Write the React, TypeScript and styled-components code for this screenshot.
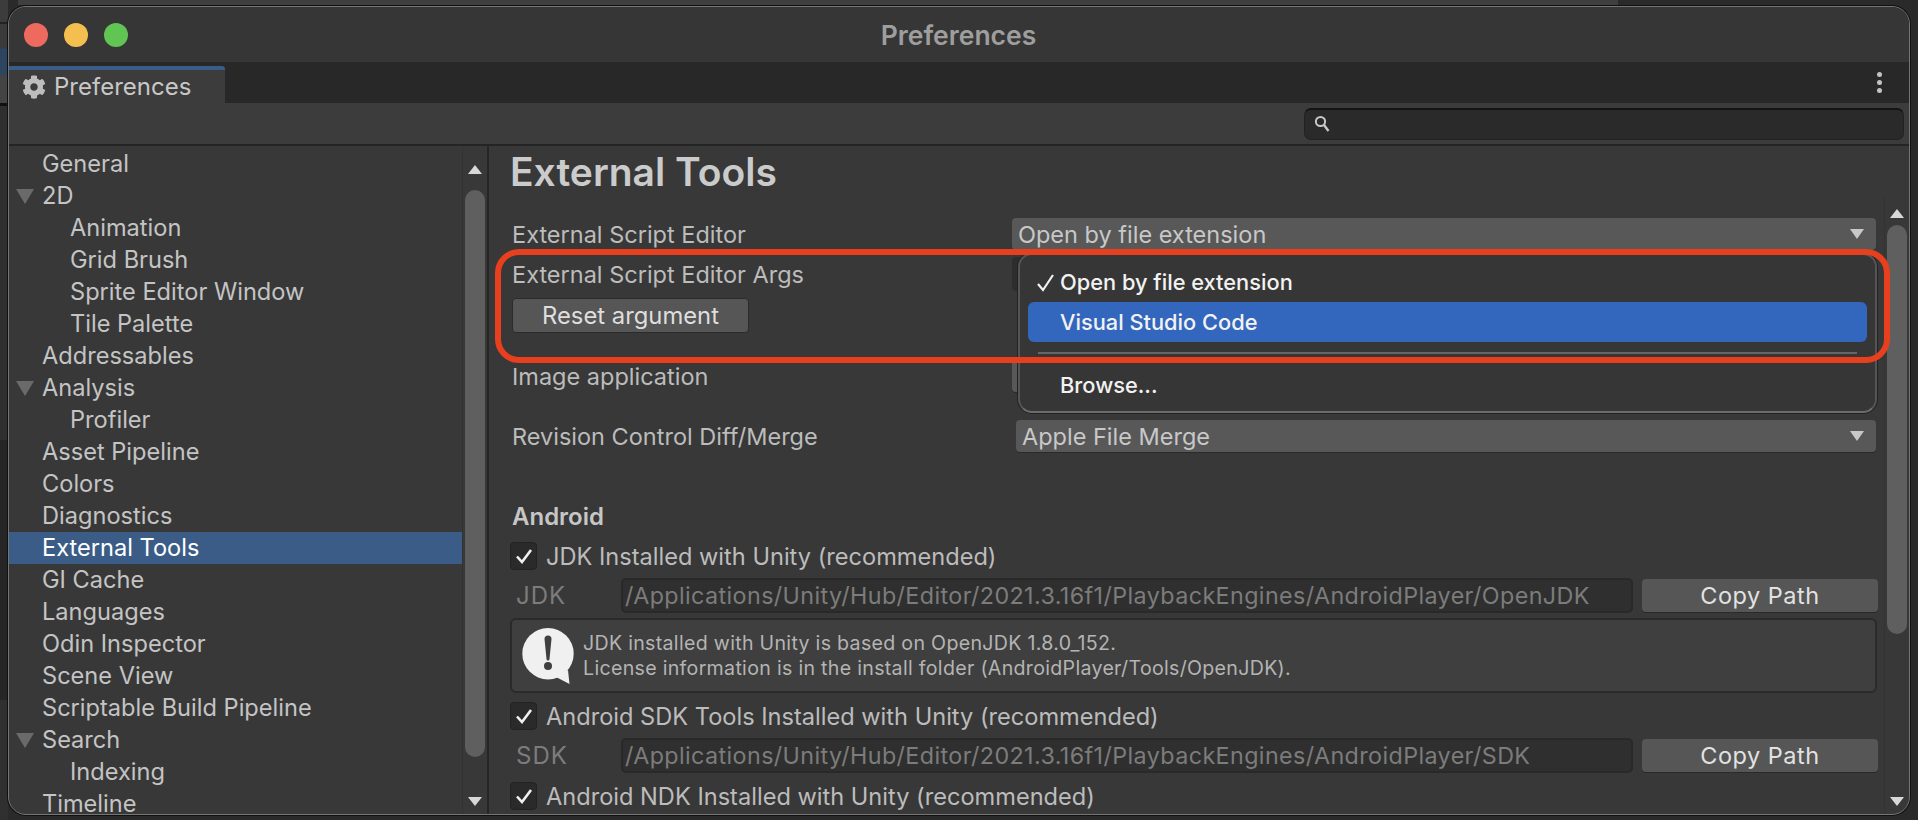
import styled, { createGlobalStyle } from "styled-components";
import { FaCog } from "react-icons/fa";

// GLOBAL ----------------------------------->

const GlobalStyle = createGlobalStyle`
  html, body {
    margin: 0;
    padding: 0;
    height: 820px;
    overflow: hidden;
    background: #2c2c2c;
  }
  * {
    box-sizing: border-box;
  }
`;

// WINDOW ----------------------------------->

const Desktop = styled.div`
  width: 1918px;
  height: 820px;
  padding: 6px 8px 5px 8px;
  font-family: Inter, "Liberation Sans", sans-serif;
  background:
    linear-gradient(#3f3f3f, #3f3f3f) 18px 0 / 1600px 5px no-repeat,
    linear-gradient(#3c3c3c 0 22px, #222 22px 24px, #3a3a3a 24px 48px, #2e4560 49px 75px, #444 76px 103px, #111 103px 106px, #2f2f2f 106px 440px, #262626 440px 700px, #303030 700px) 0 0 / 8px 820px no-repeat,
    #2a2a2a;
`;

const Window = styled.div`
  position: relative;
  display: flex;
  flex-direction: column;
  width: 1902px;
  height: 809px;
  background: #383838;
  border: 1px solid #757575;
  border-radius: 18px;
  box-shadow: 0 0 0 1px #111;
  overflow: hidden;
`;

const TitleBar = styled.div`
  display: flex;
  align-items: center;
  height: 55px;
  padding-left: 15px;
  gap: 16px;
  background: #363636;
  position: relative;
  flex: none;
`;

const Light = styled.span<{ $color: string }>`
  width: 24px;
  height: 24px;
  border-radius: 50%;
  background: ${(p) => p.$color};
`;

const WindowTitle = styled.div`
  flex: 1;
  text-align: center;
  margin-left: -80px;
  padding-right: 56px;
  font-size: 26.5px;
  font-weight: 600;
  color: #9e9e9e;
`;

const TabStrip = styled.div`
  display: flex;
  justify-content: space-between;
  align-items: flex-end;
  height: 41px;
  background: #282828;
  flex: none;
`;

const Tab = styled.div`
  display: flex;
  align-items: center;
  gap: 8px;
  width: 216px;
  height: 37px;
  padding-left: 13px;
  background: #3c3c3c;
  border-top: 4px solid #3a5c86;
  border-top-right-radius: 3px;
  font-size: 24px;
  color: #c8c8c8;
  svg {
    color: #bdbdbd;
    flex: none;
  }
`;

const MoreDots = styled.div`
  display: flex;
  flex-direction: column;
  gap: 3px;
  align-self: center;
  margin-right: 27px;
  span {
    width: 5px;
    height: 5px;
    border-radius: 50%;
    background: #c4c4c4;
  }
`;

const Toolbar = styled.div`
  display: flex;
  align-items: center;
  justify-content: flex-end;
  height: 43px;
  padding-right: 5px;
  background: #3c3c3c;
  border-bottom: 2px solid #242424;
  flex: none;
`;

const SearchBox = styled.div`
  display: flex;
  align-items: center;
  width: 600px;
  height: 32px;
  padding-left: 9px;
  background: #2a2a2a;
  border: 1px solid #222;
  border-top: 2px solid #141414;
  border-radius: 7px;
`;

const Body = styled.div`
  position: relative;
  display: flex;
  flex: 1;
  min-height: 0;
`;

// SIDEBAR ----------------------------------->

const Sidebar = styled.div`
  display: flex;
  width: 480px;
  flex: none;
  border-right: 2px solid #262626;
`;

const SideList = styled.div`
  width: 454px;
  padding-top: 2px;
  overflow: hidden;
`;

const SideRow = styled.div<{ $child?: boolean; $selected?: boolean }>`
  display: flex;
  align-items: center;
  height: 32px;
  padding-left: ${(p) => (p.$child ? 61 : 33)}px;
  padding-bottom: 2px;
  position: relative;
  font-size: 23.6px;
  white-space: nowrap;
  color: ${(p) => (p.$selected ? "#ffffff" : "#c4c4c4")};
  background: ${(p) => (p.$selected ? "#3a5c86" : "transparent")};
`;

const Twisty = styled.span`
  position: absolute;
  left: 7px;
  top: 9px;
  border-left: 9px solid transparent;
  border-right: 9px solid transparent;
  border-top: 15px solid #6a6a6a;
`;

// SCROLLBARS ----------------------------------->

const ScrollTrack = styled.div<{ $top: number }>`
  display: flex;
  flex-direction: column;
  align-items: center;
  width: 25px;
  flex: none;
  margin-top: ${(p) => p.$top}px;
  padding-bottom: 8px;
  border-left: 1px solid #333;
`;

const ArrowUp = styled.span<{ $top: number }>`
  flex: none;
  margin-top: ${(p) => p.$top}px;
  border-left: 7px solid transparent;
  border-right: 7px solid transparent;
  border-bottom: 9px solid #d8d8d8;
`;

const ArrowDown = styled.span`
  flex: none;
  margin-top: auto;
  border-left: 7px solid transparent;
  border-right: 7px solid transparent;
  border-top: 9px solid #d8d8d8;
`;

const Thumb = styled.div<{ $height: number; $gap: number }>`
  width: 20px;
  height: ${(p) => p.$height}px;
  margin-top: ${(p) => p.$gap}px;
  background: #5f5f5f;
  border-radius: 10px;
`;

// MAIN PANEL ----------------------------------->

const Main = styled.div`
  flex: 1;
  min-width: 0;
  padding: 0 8px 0 22px;
  overflow: hidden;
`;

const PageTitle = styled.h1`
  margin: 0 0 0 -1px;
  height: 72px;
  padding-top: 6px;
  line-height: 40px;
  font-size: 39px;
  font-weight: 600;
  color: #cbcbcb;
`;

const FormRow = styled.div<{ $mt?: number }>`
  display: flex;
  align-items: center;
  height: 32px;
  margin-top: ${(p) => p.$mt ?? 0}px;
`;

const Label = styled.div`
  width: 501px;
  flex: none;
  padding-left: 1px;
  font-size: 23.5px;
  color: #bcbcbc;
`;

const Dropdown = styled.div<{ $inset?: number }>`
  display: flex;
  align-items: center;
  justify-content: space-between;
  flex: 1;
  height: 32px;
  margin-left: ${(p) => p.$inset ?? 0}px;
  padding: 0 10px 0 6px;
  font-size: 23.5px;
  color: #c8c8c8;
  background: #585858;
  border-radius: 4px;
  box-shadow: 0 1px 0 #2a2a2a;
  &::after {
    content: "";
    margin-left: auto;
    border-left: 7px solid transparent;
    border-right: 7px solid transparent;
    border-top: 10px solid #c8c8c8;
    margin-right: 2px;
  }
`;

const ArgsField = styled.div`
  flex: 1;
  height: 34px;
  background: #2d2d2d;
  border-radius: 4px;
`;

const ResetButton = styled.div`
  display: flex;
  align-items: center;
  justify-content: center;
  width: 237px;
  height: 35px;
  margin: 8px 0 27px 1px;
  font-size: 23.8px;
  color: #dedede;
  background: #565656;
  border: 1px solid #2b2b2b;
  border-radius: 4px;
`;

const SectionHead = styled.div`
  margin: 50px 0 0 0;
  height: 30px;
  line-height: 30px;
  padding-left: 1px;
  font-size: 24px;
  font-weight: 600;
  color: #c6c6c6;
`;

const CheckRow = styled.div<{ $mt: number }>`
  display: flex;
  align-items: center;
  gap: 9px;
  height: 28px;
  margin-top: ${(p) => p.$mt}px;
  margin-left: -1px;
  font-size: 23.6px;
  color: #bcbcbc;
  white-space: nowrap;
`;

const CheckBox = styled.span`
  display: flex;
  align-items: center;
  justify-content: center;
  width: 27px;
  height: 28px;
  flex: none;
  background: #2a2a2a;
  border: 1px solid #222;
  border-radius: 4px;
`;

const PathRow = styled.div`
  display: flex;
  align-items: center;
  height: 35px;
  margin-top: 8px;
`;

const PathLabel = styled.div`
  width: 110px;
  flex: none;
  padding-left: 5px;
  font-size: 24px;
  letter-spacing: 1px;
  color: #7c7c7c;
`;

const PathField = styled.div`
  display: flex;
  align-items: center;
  width: 1012px;
  height: 35px;
  flex: none;
  padding-left: 2px;
  font-size: 23.3px;
  letter-spacing: 0.4px;
  white-space: nowrap;
  color: #7c7c7c;
  background: #2f2f2f;
  border: 2px solid #292929;
  border-radius: 5px;
`;

const CopyButton = styled.div`
  display: flex;
  align-items: center;
  justify-content: center;
  width: 236px;
  height: 33px;
  margin-left: 9px;
  flex: none;
  font-size: 23.5px;
  letter-spacing: 0.5px;
  color: #e2e2e2;
  background: #565656;
  border-radius: 4px;
  box-shadow: 0 1px 0 #2a2a2a;
`;

const InfoBox = styled.div`
  display: flex;
  align-items: center;
  gap: 9px;
  width: 1367px;
  height: 75px;
  margin: 5px 0 0 -1px;
  padding-left: 10px;
  background: #3f3f3f;
  border: 2px solid #2a2a2a;
  border-radius: 6px;
`;

const InfoText = styled.div`
  font-size: 19.6px;
  line-height: 25px;
  letter-spacing: 0.3px;
  color: #b4b4b4;
  white-space: nowrap;
`;

// OVERLAYS ----------------------------------->

const Menu = styled.div`
  position: absolute;
  left: 1009px;
  top: 107px;
  width: 859px;
  height: 160px;
  padding: 7px 8px 0 8px;
  background: #363636;
  border: 2px solid #555;
  border-bottom-color: #6c6c6c;
  border-radius: 14px;
  box-shadow: 0 0 0 1px #222;
`;

const MenuItem = styled.div<{ $active?: boolean }>`
  display: flex;
  align-items: center;
  height: 40px;
  padding-left: 32px;
  position: relative;
  font-size: 21.8px;
  font-weight: 500;
  color: #f2f2f2;
  border-radius: 6px;
  background: ${(p) => (p.$active ? "#3367bd" : "transparent")};
`;

const MenuCheck = styled.svg`
  position: absolute;
  left: 8px;
  top: 11px;
`;

const MenuSep = styled.div`
  height: 2px;
  margin: 10px 10px 11px 10px;
  background: #666;
`;

const Annotation = styled.div`
  position: absolute;
  left: 486px;
  top: 103px;
  width: 1395px;
  height: 114px;
  border: 6px solid #e8401e;
  border-radius: 24px;
  pointer-events: none;
`;

// DATA ----------------------------------->

const sideItems = [
  { name: "General" },
  { name: "2D", open: true },
  { name: "Animation", child: true },
  { name: "Grid Brush", child: true },
  { name: "Sprite Editor Window", child: true },
  { name: "Tile Palette", child: true },
  { name: "Addressables" },
  { name: "Analysis", open: true },
  { name: "Profiler", child: true },
  { name: "Asset Pipeline" },
  { name: "Colors" },
  { name: "Diagnostics" },
  { name: "External Tools", selected: true },
  { name: "GI Cache" },
  { name: "Languages" },
  { name: "Odin Inspector" },
  { name: "Scene View" },
  { name: "Scriptable Build Pipeline" },
  { name: "Search", open: true },
  { name: "Indexing", child: true },
  { name: "Timeline" },
];

const basePath = "/Applications/Unity/Hub/Editor/2021.3.16f1/PlaybackEngines/AndroidPlayer";

const Tick = () => (
  <svg width="18" height="16" viewBox="0 0 18 16">
    <path d="M2 8.5 L7 14 L16 2" fill="none" stroke="#f0f0f0" strokeWidth="2.6" />
  </svg>
);

const App = () => {
  return (
    <Desktop>
      <GlobalStyle />
      <Window>
        <TitleBar>
          <Light $color="#ee6a5f" />
          <Light $color="#f5bf4f" />
          <Light $color="#61c554" />
          <WindowTitle>Preferences</WindowTitle>
        </TitleBar>
        <TabStrip>
          <Tab>
            <FaCog size={24} />
            Preferences
          </Tab>
          <MoreDots>
            <span />
            <span />
            <span />
          </MoreDots>
        </TabStrip>
        <Toolbar>
          <SearchBox>
            <svg width="16" height="18" viewBox="0 0 16 18">
              <circle cx="6.5" cy="6.5" r="4.6" fill="none" stroke="#c8c8c8" strokeWidth="2" />
              <path d="M10 10 L14.5 16" stroke="#c8c8c8" strokeWidth="2.4" />
            </svg>
          </SearchBox>
        </Toolbar>
        <Body>
          <Sidebar>
            <SideList>
              {sideItems.map((item) => (
                <SideRow key={item.name} $child={item.child} $selected={item.selected}>
                  {item.open ? <Twisty /> : null}
                  {item.name}
                </SideRow>
              ))}
            </SideList>
            <ScrollTrack $top={0}>
              <ArrowUp $top={19} />
              <Thumb $height={567} $gap={16} />
              <ArrowDown />
            </ScrollTrack>
          </Sidebar>
          <Main>
            <PageTitle>External Tools</PageTitle>
            <FormRow>
              <Label>External Script Editor</Label>
              <Dropdown>Open by file extension</Dropdown>
            </FormRow>
            <FormRow $mt={8}>
              <Label>External Script Editor Args</Label>
              <ArgsField />
            </FormRow>
            <ResetButton>Reset argument</ResetButton>
            <FormRow>
              <Label>Image application</Label>
              <Dropdown />
            </FormRow>
            <FormRow $mt={28}>
              <Label>Revision Control Diff/Merge</Label>
              <Dropdown $inset={4}>Apple File Merge</Dropdown>
            </FormRow>
            <SectionHead>Android</SectionHead>
            <CheckRow $mt={10}>
              <CheckBox>
                <Tick />
              </CheckBox>
              JDK Installed with Unity (recommended)
            </CheckRow>
            <PathRow>
              <PathLabel>JDK</PathLabel>
              <PathField>{basePath}/OpenJDK</PathField>
              <CopyButton>Copy Path</CopyButton>
            </PathRow>
            <InfoBox>
              <svg width="52" height="56" viewBox="0 0 52 56">
                <circle cx="26" cy="25.7" r="25.7" fill="#f0f0f0" />
                <path d="M34 49 L47.5 56 L46 42 Z" fill="#f0f0f0" />
                <path d="M22.5 11 a3.5 3.5 0 0 1 7 0 L27.5 31 a1.5 1.5 0 0 1 -3 0 Z" fill="#3f3f3f" />
                <circle cx="26" cy="38" r="4" fill="#3f3f3f" />
              </svg>
              <InfoText>
                JDK installed with Unity is based on OpenJDK 1.8.0_152.
                <br />
                License information is in the install folder (AndroidPlayer/Tools/OpenJDK).
              </InfoText>
            </InfoBox>
            <CheckRow $mt={9}>
              <CheckBox>
                <Tick />
              </CheckBox>
              Android SDK Tools Installed with Unity (recommended)
            </CheckRow>
            <PathRow>
              <PathLabel>SDK</PathLabel>
              <PathField>{basePath}/SDK</PathField>
              <CopyButton>Copy Path</CopyButton>
            </PathRow>
            <CheckRow $mt={9}>
              <CheckBox>
                <Tick />
              </CheckBox>
              Android NDK Installed with Unity (recommended)
            </CheckRow>
          </Main>
          <ScrollTrack $top={50}>
            <ArrowUp $top={13} />
            <Thumb $height={409} $gap={7} />
            <ArrowDown />
          </ScrollTrack>
          <Menu>
            <MenuItem>
              <MenuCheck width="20" height="20" viewBox="0 0 20 20">
                <path d="M2 11 L7 17 L17 2" fill="none" stroke="#f2f2f2" strokeWidth="2.2" />
              </MenuCheck>
              Open by file extension
            </MenuItem>
            <MenuItem $active>Visual Studio Code</MenuItem>
            <MenuSep />
            <MenuItem>Browse...</MenuItem>
          </Menu>
          <Annotation />
        </Body>
      </Window>
    </Desktop>
  );
};

export default App;
